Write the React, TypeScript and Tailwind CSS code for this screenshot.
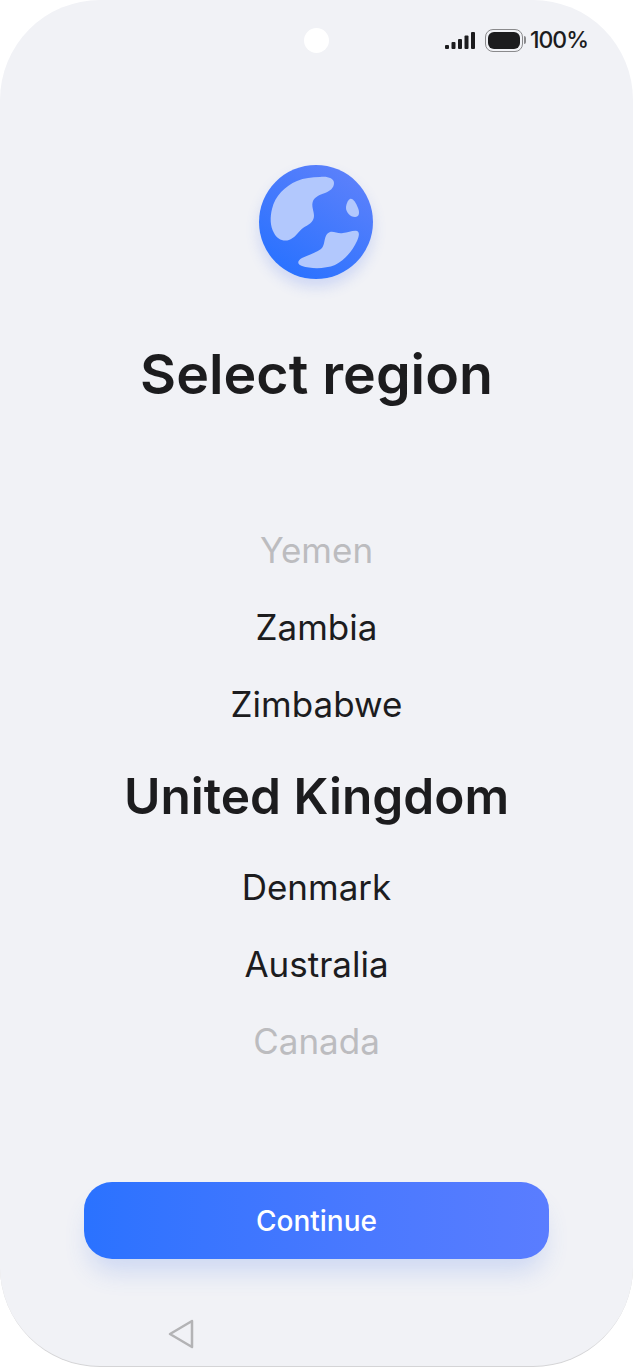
const regionsAbove = ["Zambia", "Zimbabwe"];
const regionsBelow = ["Denmark", "Australia"];

function Globe() {
  return (
    <svg viewBox="0 0 114 114" className="h-[114px] w-[114px]">
      <defs>
        <linearGradient id="globe" x1="0.25" y1="0.95" x2="0.8" y2="0.1">
          <stop offset="0" stopColor="#2a72ff" />
          <stop offset="1" stopColor="#5a80fb" />
        </linearGradient>
      </defs>
      <circle cx="57" cy="57" r="57" fill="url(#globe)" />
      <path
        d="M61 12C68 11 75 13 75 18C75 23 71 26 66 28C60 30 56 32 54 36C52 41 55 46 55 51C55 57 49 60 44 63C39 67 36 73 30 75C24 77 18 74 15 68C11 61 11 52 13 44C16 31 26 21 38 16C45 13 53 12 61 12Z"
        fill="#b2c8fd"
      />
      <path
        d="M91 34C94 33 97 38 99 43C101 48 100 52 96 52C91 52 87 47 87 43C87 39 89 35 91 34Z"
        fill="#b2c8fd"
      />
      <path
        d="M71 67C75 66 79 69 84 68C89 68 94 65 98 66C101 67 100 72 98 76C94 85 86 95 76 100C66 104 52 104 43 101C38 99 38 96 43 93C49 90 57 88 62 84C67 80 64 69 71 67Z"
        fill="#b2c8fd"
      />
    </svg>
  );
}

function SignalBars() {
  return (
    <svg viewBox="0 0 30 17" className="h-[17px] w-[30px]">
      <rect x="0" y="13" width="4" height="4" rx="1" fill="#1c1c1e" />
      <rect x="6.5" y="10" width="4" height="7" rx="1" fill="#1c1c1e" />
      <rect x="13" y="7" width="4" height="10" rx="1" fill="#1c1c1e" />
      <rect x="19.5" y="3.5" width="4" height="13.5" rx="1" fill="#1c1c1e" />
      <rect x="26" y="0" width="4" height="17" rx="1" fill="#1c1c1e" />
    </svg>
  );
}

function Battery() {
  return (
    <div className="flex items-center gap-px">
      <div className="h-[23px] w-[38px] rounded-[8px] border border-[#8a8a8c] p-[2px]">
        <div className="h-full w-full rounded-[6px] bg-[#1c1c1e]" />
      </div>
      <div className="h-[8px] w-[2px] rounded-r-sm bg-[#8a8a8c]" />
    </div>
  );
}

export default function App() {
  return (
    <div
      className="h-[1368px] w-[633px] overflow-hidden bg-white"
      style={{ fontFamily: "'Inter', 'Noto Sans', sans-serif" }}
    >
      <div className="relative flex h-[1367px] flex-col items-center rounded-[100px] border-b border-[#d4d4d6] bg-[#f1f2f6]">
        {/* Punch hole */}
        <div className="absolute left-[304px] top-[28px] h-[25px] w-[25px] rounded-full bg-white" />

        {/* Status bar */}
        <div className="flex h-[80px] w-full items-center justify-end pr-[45px]">
          <SignalBars />
          <div className="ml-[10px]">
            <Battery />
          </div>
          <span className="ml-[4px] text-[23px] font-medium tracking-[-1px] text-[#1c1c1e]">100%</span>
        </div>

        <div className="mt-[85px] mr-px rounded-full shadow-[0_8px_14px_rgba(70,110,240,0.2)]">
          <Globe />
        </div>

        <h1 className="mt-[59px] text-[55.5px] leading-[72px] font-semibold text-[#1c1c1e]">Select region</h1>

        {/* Region picker */}
        <div className="mt-[102px] flex flex-col items-center text-[35px] text-[#1c1c1e]">
          <div className="flex h-[77px] items-center text-[#bcbcbf]">Yemen</div>
          {regionsAbove.map((r) => (
            <div key={r} className="flex h-[77px] items-center">{r}</div>
          ))}
          <div className="flex h-[106px] items-center text-[49.6px] font-semibold">United Kingdom</div>
          {regionsBelow.map((r) => (
            <div key={r} className="flex h-[77px] items-center">{r}</div>
          ))}
          <div className="flex h-[77px] items-center text-[#bcbcbf]">Canada</div>
        </div>

        <button className="mt-[102px] h-[77px] w-[465px] rounded-[28px] bg-gradient-to-r from-[#2a72ff] to-[#5a7dff] text-[28px] font-medium text-white shadow-[0_18px_26px_-6px_rgba(60,110,230,0.2)]">
          Continue
        </button>

        {/* Nav bar */}
        <div className="mt-[60px] w-full pl-[168px]">
          <svg viewBox="0 0 26 30" className="h-[30px] w-[26px]" fill="none">
            <path d="M24 2L2 15L24 28Z" stroke="#b3b3b5" strokeWidth="2.5" strokeLinejoin="round" />
          </svg>
        </div>
      </div>
    </div>
  );
}
